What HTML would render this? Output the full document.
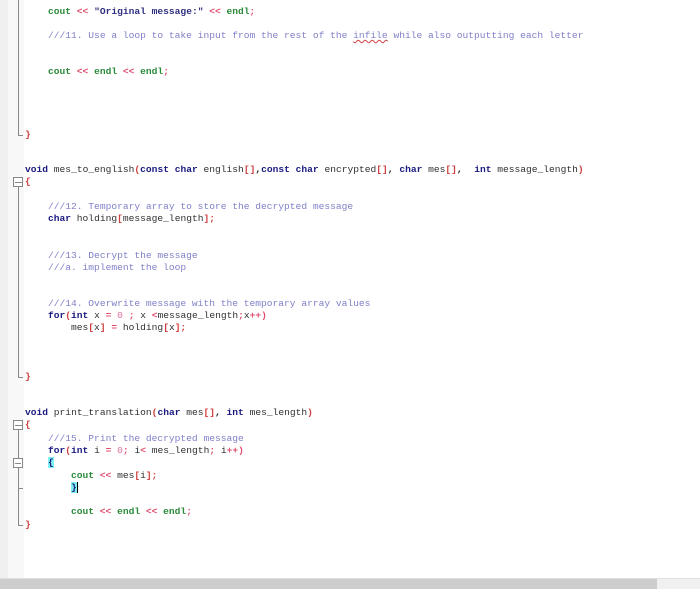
<!DOCTYPE html>
<html><head><meta charset="utf-8"><style>
body{margin:0;width:700px;height:589px;background:#fff;position:relative;overflow:hidden;font-family:"Liberation Mono",monospace;font-size:9.6px;font-weight:bold}
.g1{position:absolute;left:0;top:0;width:8px;height:579px;background:#f0f0f0}
.g2{position:absolute;left:8px;top:0;width:16px;height:579px;background:#f8f8f8}
.l{position:absolute;white-space:pre;line-height:12px;height:12px;color:#222}
.k{color:#1a1a80}.c{color:#8080c8;font-weight:normal}.o{color:#e05070}.b{color:#d04040}.g{color:#2a8a3a}.s{color:#303080}.n{color:#e070a0;font-weight:normal}.p{color:#303030;font-weight:normal}
.vl{position:absolute;left:18px;width:1px;background:#888}
.hl{position:absolute;left:18px;height:1px;width:5px;background:#888}
.box{position:absolute;left:13px;width:8px;height:8px;border:1px solid #888;background:#fff}
.box:after{content:"";position:absolute;left:1px;top:4px;width:6px;height:1px;background:#888}
.hl2{position:absolute;left:18px;width:5px;height:1px;background:#888}
</style></head><body>
<div class="g1"></div><div class="g2"></div>
<div class="vl" style="top:0;height:136px"></div><div class="hl" style="top:135px"></div>
<div class="box" style="top:177px"></div><div class="hl2" style="top:182px"></div>
<div class="vl" style="top:187px;height:191px"></div><div class="hl" style="top:377px"></div>
<div class="box" style="top:420px"></div><div class="hl2" style="top:425px"></div>
<div class="vl" style="top:430px;height:28px"></div>
<div class="box" style="top:458px"></div>
<div class="vl" style="top:468px;height:58px"></div><div class="hl" style="top:488px"></div><div class="hl" style="top:525px"></div>

<div class="l" style="left:48px;top:6px"><span class="g">cout</span> <span class="o">&lt;&lt;</span> <span class="s">"Original message:"</span> <span class="o">&lt;&lt;</span> <span class="g">endl</span><span class="o">;</span></div>
<div class="l c" style="left:48px;top:30px">///11. Use a loop to take input from the rest of the <span style="text-decoration:underline wavy #d04040">infile</span> while also outputting each letter</div>
<div class="l" style="left:48px;top:66px"><span class="g">cout</span> <span class="o">&lt;&lt;</span> <span class="g">endl</span> <span class="o">&lt;&lt;</span> <span class="g">endl</span><span class="o">;</span></div>
<div class="l" style="left:25px;top:129px"><span class="b">}</span></div>
<div class="l" style="left:25px;top:164px"><span class="k">void</span> <span class="p">mes_to_english</span><span class="b">(</span><span class="k">const char</span> <span class="p">english</span><span class="b">[]</span>,<span class="k">const char</span> <span class="p">encrypted</span><span class="b">[]</span>, <span class="k">char</span> <span class="p">mes</span><span class="b">[]</span>,  <span class="k">int</span> <span class="p">message_length</span><span class="b">)</span></div>
<div class="l" style="left:25px;top:176px"><span class="b">{</span></div>
<div class="l c" style="left:48px;top:201px">///12. Temporary array to store the decrypted message</div>
<div class="l" style="left:48px;top:213px"><span class="k">char</span> <span class="p">holding</span><span class="b">[</span><span class="p">message_length</span><span class="b">];</span></div>
<div class="l c" style="left:48px;top:250px">///13. Decrypt the message</div>
<div class="l c" style="left:48px;top:262px">///a. implement the loop</div>
<div class="l c" style="left:48px;top:298px">///14. Overwrite message with the temporary array values</div>
<div class="l" style="left:48px;top:310px"><span class="k">for</span><span class="b">(</span><span class="k">int</span> <span class="p">x</span> <span class="o">=</span> <span class="n">0</span> <span class="o">;</span> <span class="p">x</span> <span class="o">&lt;</span><span class="p">message_length</span><span class="o">;</span><span class="p">x</span><span class="o">++)</span></div>
<div class="l" style="left:71px;top:322px"><span class="p">mes</span><span class="b">[</span><span class="p">x</span><span class="b">]</span> <span class="o">=</span> <span class="p">holding</span><span class="b">[</span><span class="p">x</span><span class="b">];</span></div>
<div class="l" style="left:25px;top:371px"><span class="b">}</span></div>
<div class="l" style="left:25px;top:407px"><span class="k">void</span> <span class="p">print_translation</span><span class="b">(</span><span class="k">char</span> <span class="p">mes</span><span class="b">[]</span>, <span class="k">int</span> <span class="p">mes_length</span><span class="b">)</span></div>
<div class="l" style="left:25px;top:419px"><span class="b">{</span></div>
<div class="l c" style="left:48px;top:433px">///15. Print the decrypted message</div>
<div class="l" style="left:48px;top:445px"><span class="k">for</span><span class="b">(</span><span class="k">int</span> <span class="p">i</span> <span class="o">=</span> <span class="n">0</span><span class="o">;</span> <span class="p">i</span><span class="o">&lt;</span> <span class="p">mes_length</span><span class="o">;</span> <span class="p">i</span><span class="o">++)</span></div>
<div class="l" style="left:48px;top:457px"><span class="k" style="background:#80f0f0">{</span></div>
<div class="l" style="left:71px;top:470px"><span class="g">cout</span> <span class="o">&lt;&lt;</span> <span class="p">mes</span><span class="b">[</span><span class="p">i</span><span class="b">];</span></div>
<div class="l" style="left:71px;top:482px"><span class="k" style="background:#80f0f0">}</span><span style="border-left:1px solid #000"></span></div>
<div class="l" style="left:71px;top:506px"><span class="g">cout</span> <span class="o">&lt;&lt;</span> <span class="g">endl</span> <span class="o">&lt;&lt;</span> <span class="g">endl</span><span class="o">;</span></div>
<div class="l" style="left:25px;top:519px"><span class="b">}</span></div>

<div style="position:absolute;left:0;top:578px;width:700px;height:1px;background:#e0e0e0"></div>
<div style="position:absolute;left:0;top:579px;width:657px;height:10px;background:#cdcdcd"></div>
<div style="position:absolute;left:657px;top:579px;width:43px;height:10px;background:#f0f0f0"></div>
</body></html>
